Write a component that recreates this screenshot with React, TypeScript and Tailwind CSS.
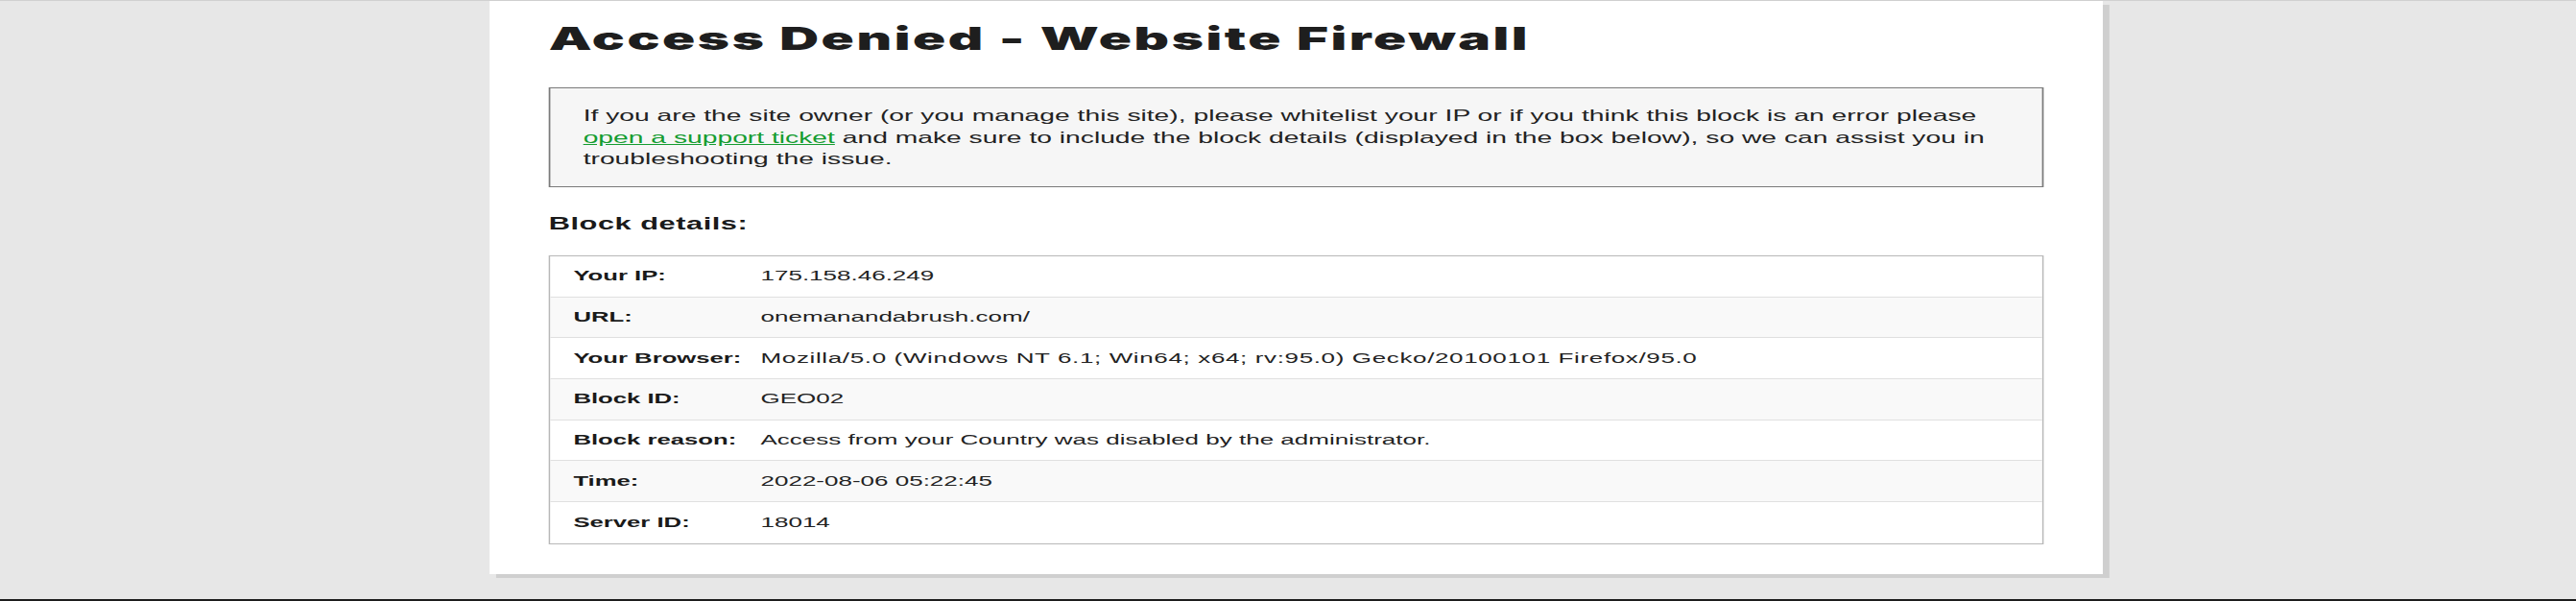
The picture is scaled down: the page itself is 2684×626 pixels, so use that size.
import React from "react";

const rows: { label: string; value: string; wide?: boolean }[] = [
  { label: "Your IP:", value: "175.158.46.249" },
  { label: "URL:", value: "onemanandabrush.com/" },
  { label: "Your Browser:", value: "Mozilla/5.0 (Windows NT 6.1; Win64; x64; rv:95.0) Gecko/20100101 Firefox/95.0", wide: true },
  { label: "Block ID:", value: "GEO02" },
  { label: "Block reason:", value: "Access from your Country was disabled by the administrator." },
  { label: "Time:", value: "2022-08-06 05:22:45" },
  { label: "Server ID:", value: "18014" },
];

export default function App() {
  return (
    <div className="w-[2684px] h-[626px] overflow-hidden bg-[#e7e7e7] flex flex-col font-['Liberation_Sans',Arial,sans-serif] text-[#222]">
      <div className="h-[624px] w-[1568px] border-t border-[#d0d0d0] origin-top-left scale-x-[1.7117]">
        <div className="ml-[298px] w-[982px] bg-white shadow-[4px_4px_0_#cfcfcf] pt-[19px] px-[36px] pb-[31px]">
          <h1 className="font-['Inter',sans-serif] font-black text-[33px] leading-[40px] tracking-[1.5px] text-[#1e1e1e] whitespace-nowrap">
            Access Denied - Website Firewall
          </h1>
          <div className="mt-[31px] border border-[#7a7a7a] bg-[#f6f6f6] px-[20px] py-[17px] text-[16.5px] leading-[22.5px]">
            If you are the site owner (or you manage this site), please whitelist your IP or if you think this block is an error please
            <br />
            <a className="text-[#149c30] underline">open a support ticket</a> and make sure to include the block details (displayed in the box below), so we can assist you in
            <br />
            troubleshooting the issue.
          </div>
          <h2 className="mt-[27.5px] font-bold text-[18px] leading-[22px] tracking-[0.3px] text-[#1a1a1a]">Block details:</h2>
          <div className="mt-[22px] border border-[#b8b8b8] flex flex-col">
            {rows.map((r, i) => (
              <div
                key={r.label}
                className={
                  "h-[42.67px] flex items-center pb-[1px] pl-[14px] " +
                  (i % 2 === 1 ? "bg-[#f9f9f9] " : "bg-white ") +
                  (i < rows.length - 1 ? "border-b border-[#e0e0e0]" : "")
                }
              >
                <div className="w-[114px] shrink-0 font-bold text-[15px] leading-[20px] text-[#1a1a1a]">{r.label}</div>
                <div className={"text-[15.2px] leading-[20px] whitespace-nowrap " + (r.wide ? "tracking-[0.37px]" : "")}>
                  {r.value}
                </div>
              </div>
            ))}
          </div>
        </div>
      </div>
      <div className="h-[2px] bg-[#1c1c1c]" />
    </div>
  );
}
